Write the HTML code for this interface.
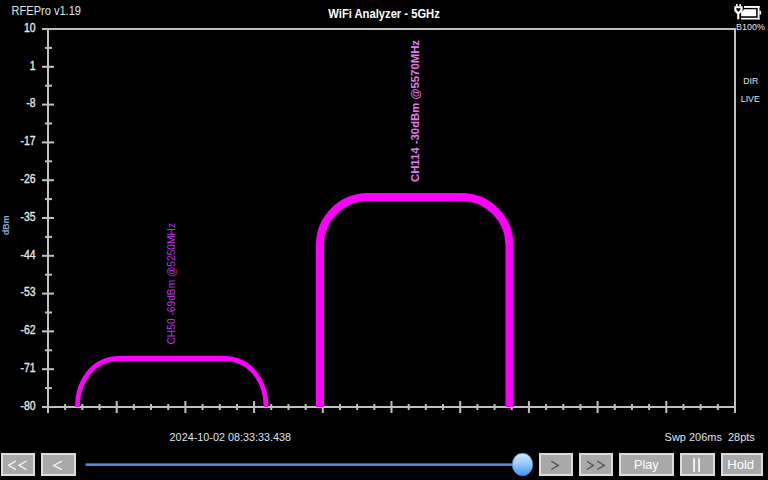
<!DOCTYPE html>
<html><head><meta charset="utf-8">
<style>
html,body{margin:0;padding:0;background:#000;width:768px;height:480px;overflow:hidden}
body{position:relative;font-family:"Liberation Sans",sans-serif}
svg{position:absolute;left:0;top:0}
text{font-family:"Liberation Sans",sans-serif}
.yl{font-size:12px;fill:#e6e6e6;stroke:#e6e6e6;stroke-width:0.35px}
.btn{position:absolute;top:453px;height:23px;box-sizing:border-box;border:2px solid #dcdcdc;background:#a9a9a9;color:#fff;font-size:12px;text-align:center;line-height:19px}
</style></head><body>
<svg width="768" height="480" viewBox="0 0 768 480">
<text x="11.5" y="14.6" font-size="12" fill="#dde5ea" textLength="69.5" lengthAdjust="spacingAndGlyphs">RFEPro v1.19</text>
<text x="328.3" y="17.8" font-size="12" fill="#ffffff" textLength="111.5" lengthAdjust="spacingAndGlyphs" font-weight="bold">WiFi Analyzer - 5GHz</text>
<text transform="translate(8.9,235) rotate(-90)" font-size="9.5" fill="#8eabd2" textLength="19.5" lengthAdjust="spacingAndGlyphs" font-weight="bold">dBm</text>
<text x="736" y="30.4" font-size="9.5" fill="#e4e4ee" textLength="29" lengthAdjust="spacingAndGlyphs">B100%</text>
<text x="743.2" y="83.7" font-size="9.5" fill="#e4e4ee" textLength="15" lengthAdjust="spacingAndGlyphs">DIR</text>
<text x="740.8" y="102.2" font-size="9.5" fill="#e4e4ee" textLength="19" lengthAdjust="spacingAndGlyphs">LIVE</text>
<text transform="translate(175.2,344.5) rotate(-90)" font-size="10.5" fill="#c030e0" textLength="121.5" lengthAdjust="spacingAndGlyphs">CH50 -69dBm @5250MHz</text>
<text transform="translate(418.5,182) rotate(-90)" font-size="10" fill="#e878f0" textLength="142" lengthAdjust="spacingAndGlyphs" font-weight="bold">CH114 -30dBm @5570MHz</text>
<text x="169.6" y="440.9" font-size="11.5" fill="#dde6ee" textLength="121.5" lengthAdjust="spacingAndGlyphs">2024-10-02 08:33:33.438</text>
<text x="664.6" y="440.6" font-size="11.5" fill="#dde6ee" textLength="90.2" lengthAdjust="spacingAndGlyphs">Swp 206ms  28pts</text>
<rect x="42" y="28" width="694" height="2" fill="#c0c0c0"/>
<rect x="47" y="28" width="2" height="385" fill="#c0c0c0"/>
<rect x="42" y="406" width="694" height="2" fill="#c0c0c0"/>
<rect x="734" y="28" width="2" height="385" fill="#c0c0c0"/>
<rect x="42" y="28.00" width="12" height="2" fill="#c0c0c0"/>
<rect x="45" y="46.90" width="7" height="2" fill="#c0c0c0"/>
<rect x="42" y="65.80" width="12" height="2" fill="#c0c0c0"/>
<rect x="45" y="84.70" width="7" height="2" fill="#c0c0c0"/>
<rect x="42" y="103.60" width="12" height="2" fill="#c0c0c0"/>
<rect x="45" y="122.50" width="7" height="2" fill="#c0c0c0"/>
<rect x="42" y="141.40" width="12" height="2" fill="#c0c0c0"/>
<rect x="45" y="160.30" width="7" height="2" fill="#c0c0c0"/>
<rect x="42" y="179.20" width="12" height="2" fill="#c0c0c0"/>
<rect x="45" y="198.10" width="7" height="2" fill="#c0c0c0"/>
<rect x="42" y="217.00" width="12" height="2" fill="#c0c0c0"/>
<rect x="45" y="235.90" width="7" height="2" fill="#c0c0c0"/>
<rect x="42" y="254.80" width="12" height="2" fill="#c0c0c0"/>
<rect x="45" y="273.70" width="7" height="2" fill="#c0c0c0"/>
<rect x="42" y="292.60" width="12" height="2" fill="#c0c0c0"/>
<rect x="45" y="311.50" width="7" height="2" fill="#c0c0c0"/>
<rect x="42" y="330.40" width="12" height="2" fill="#c0c0c0"/>
<rect x="45" y="349.30" width="7" height="2" fill="#c0c0c0"/>
<rect x="42" y="368.20" width="12" height="2" fill="#c0c0c0"/>
<rect x="45" y="387.10" width="7" height="2" fill="#c0c0c0"/>
<rect x="42" y="406.00" width="12" height="2" fill="#c0c0c0"/>
<rect x="47.00" y="401" width="2" height="12" fill="#c0c0c0"/>
<rect x="64.17" y="404" width="2" height="6" fill="#c0c0c0"/>
<rect x="81.35" y="404" width="2" height="6" fill="#c0c0c0"/>
<rect x="98.53" y="404" width="2" height="6" fill="#c0c0c0"/>
<rect x="115.70" y="401" width="2" height="12" fill="#c0c0c0"/>
<rect x="132.88" y="404" width="2" height="6" fill="#c0c0c0"/>
<rect x="150.05" y="404" width="2" height="6" fill="#c0c0c0"/>
<rect x="167.22" y="404" width="2" height="6" fill="#c0c0c0"/>
<rect x="184.40" y="401" width="2" height="12" fill="#c0c0c0"/>
<rect x="201.57" y="404" width="2" height="6" fill="#c0c0c0"/>
<rect x="218.75" y="404" width="2" height="6" fill="#c0c0c0"/>
<rect x="235.93" y="404" width="2" height="6" fill="#c0c0c0"/>
<rect x="253.10" y="401" width="2" height="12" fill="#c0c0c0"/>
<rect x="270.27" y="404" width="2" height="6" fill="#c0c0c0"/>
<rect x="287.45" y="404" width="2" height="6" fill="#c0c0c0"/>
<rect x="304.62" y="404" width="2" height="6" fill="#c0c0c0"/>
<rect x="321.80" y="401" width="2" height="12" fill="#c0c0c0"/>
<rect x="338.98" y="404" width="2" height="6" fill="#c0c0c0"/>
<rect x="356.15" y="404" width="2" height="6" fill="#c0c0c0"/>
<rect x="373.32" y="404" width="2" height="6" fill="#c0c0c0"/>
<rect x="390.50" y="401" width="2" height="12" fill="#c0c0c0"/>
<rect x="407.68" y="404" width="2" height="6" fill="#c0c0c0"/>
<rect x="424.85" y="404" width="2" height="6" fill="#c0c0c0"/>
<rect x="442.02" y="404" width="2" height="6" fill="#c0c0c0"/>
<rect x="459.20" y="401" width="2" height="12" fill="#c0c0c0"/>
<rect x="476.38" y="404" width="2" height="6" fill="#c0c0c0"/>
<rect x="493.55" y="404" width="2" height="6" fill="#c0c0c0"/>
<rect x="510.73" y="404" width="2" height="6" fill="#c0c0c0"/>
<rect x="527.90" y="401" width="2" height="12" fill="#c0c0c0"/>
<rect x="545.08" y="404" width="2" height="6" fill="#c0c0c0"/>
<rect x="562.25" y="404" width="2" height="6" fill="#c0c0c0"/>
<rect x="579.42" y="404" width="2" height="6" fill="#c0c0c0"/>
<rect x="596.60" y="401" width="2" height="12" fill="#c0c0c0"/>
<rect x="613.77" y="404" width="2" height="6" fill="#c0c0c0"/>
<rect x="630.95" y="404" width="2" height="6" fill="#c0c0c0"/>
<rect x="648.12" y="404" width="2" height="6" fill="#c0c0c0"/>
<rect x="665.30" y="401" width="2" height="12" fill="#c0c0c0"/>
<rect x="682.48" y="404" width="2" height="6" fill="#c0c0c0"/>
<rect x="699.65" y="404" width="2" height="6" fill="#c0c0c0"/>
<rect x="716.83" y="404" width="2" height="6" fill="#c0c0c0"/>
<rect x="734.00" y="401" width="2" height="12" fill="#c0c0c0"/>
<text transform="translate(35.5,31.8) scale(0.87,1)" text-anchor="end" class="yl">10</text>
<text transform="translate(35.5,69.6) scale(0.87,1)" text-anchor="end" class="yl">1</text>
<text transform="translate(35.5,107.4) scale(0.87,1)" text-anchor="end" class="yl">-8</text>
<text transform="translate(35.5,145.2) scale(0.87,1)" text-anchor="end" class="yl">-17</text>
<text transform="translate(35.5,183.0) scale(0.87,1)" text-anchor="end" class="yl">-26</text>
<text transform="translate(35.5,220.8) scale(0.87,1)" text-anchor="end" class="yl">-35</text>
<text transform="translate(35.5,258.6) scale(0.87,1)" text-anchor="end" class="yl">-44</text>
<text transform="translate(35.5,296.4) scale(0.87,1)" text-anchor="end" class="yl">-53</text>
<text transform="translate(35.5,334.2) scale(0.87,1)" text-anchor="end" class="yl">-62</text>
<text transform="translate(35.5,372.0) scale(0.87,1)" text-anchor="end" class="yl">-71</text>
<text transform="translate(35.5,409.8) scale(0.87,1)" text-anchor="end" class="yl">-80</text>
<path d="M77.4,407 C77.4,381.3 93.2,358.5 119.3,358.5 H224.2 C250.3,358.5 266.1,381.3 266.1,407" fill="none" stroke="#ff00ff" stroke-width="4.8"/>
<path d="M320,407 V245 A48,48 0 0 1 368,197 H461.5 A48,48 0 0 1 509.5,245 V407" fill="none" stroke="#ff00ff" stroke-width="8"/>
<defs><linearGradient id="sl" x1="0" y1="0" x2="0" y2="1"><stop offset="0" stop-color="#4c5c74"/><stop offset="0.35" stop-color="#5d8cd8"/><stop offset="1" stop-color="#4a7cd0"/></linearGradient></defs><rect x="85.5" y="463.2" width="430" height="2.8" fill="url(#sl)"/>
<g stroke="#dcdcdc" stroke-width="2" fill="#a9a9a9">
<rect x="2" y="454" width="32" height="21"/>
<rect x="42" y="454" width="33" height="21"/>
<rect x="540" y="454" width="32" height="21"/>
<rect x="580" y="454" width="32" height="21"/>
<rect x="620" y="454" width="53" height="21"/>
<rect x="681" y="454" width="33" height="21"/>
<rect x="722" y="454" width="40" height="21"/>
</g>
<g fill="none" stroke="#f4f4f4" stroke-width="1.35" stroke-linecap="butt">
<path d="M15.8,461 L8.6,465.3 L15.8,469.6 M26.5,461 L19.1,465.3 L26.5,469.6 M62,461.2 L53.7,465.45 L62,469.7"/>
</g>
<g fill="none" stroke="#555555" stroke-width="1.35">
<path d="M551.3,461.2 L558.3,465.4 L551.3,469.5 M586.9,461.2 L593.4,465.4 L586.9,469.5 M597.3,461.2 L604.2,465.4 L597.3,469.5"/>
</g>
<rect x="693.2" y="458.4" width="1.8" height="13.5" fill="#f4f4f4"/>
<rect x="698.2" y="458.4" width="1.8" height="13.5" fill="#f4f4f4"/>
<text x="634" y="469.4" font-size="13" fill="#ffffff" textLength="24.5" lengthAdjust="spacingAndGlyphs">Play</text>
<text x="727.3" y="469" font-size="13" fill="#ffffff" textLength="26.8" lengthAdjust="spacingAndGlyphs">Hold</text>
<defs><linearGradient id="tg" x1="0" y1="0" x2="0" y2="1"><stop offset="0" stop-color="#d4e8fc"/><stop offset="0.45" stop-color="#9ccaf8"/><stop offset="1" stop-color="#3c96f0"/></linearGradient></defs>
<ellipse cx="522.5" cy="464.5" rx="10.3" ry="11.3" fill="url(#tg)" stroke="#3d86d8" stroke-width="0.7"/>
<g fill="#fff">
<rect x="736" y="4" width="1.6" height="2.4"/><rect x="739.4" y="4" width="1.6" height="2.4"/>
<path d="M734.3,6.2 H742.6 V11.1 L739.3,13.9 H737.1 L734.3,11.1 Z M736.2,8.8 Q736.2,7.9 737.2,7.9 Q738.3,7.9 738.4,8.6 Q738.5,7.9 739.5,7.9 Q740.5,7.9 740.5,8.8 Q740.5,10.3 738.4,11.7 Q736.2,10.3 736.2,8.8 Z" fill-rule="evenodd"/>
<rect x="737.2" y="13" width="2.1" height="6.4"/>
<rect x="744" y="6" width="15.5" height="1.9"/>
<rect x="757.7" y="6" width="1.8" height="13.5"/>
<rect x="741" y="17.8" width="18.5" height="1.7"/>
<path d="M744.4,9.3 H756.2 V16.2 H741.1 V12.4 Z"/>
<rect x="759.4" y="10.8" width="1.7" height="3.7"/>
</g>
</svg>
</body></html>
